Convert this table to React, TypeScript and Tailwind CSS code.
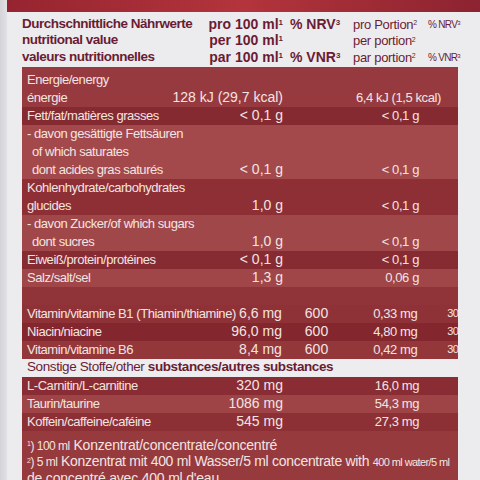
import React from "react";

type Row = {
  l: string;
  v?: string;
  n?: string;
  p?: string;
  q?: string;
  indent?: boolean;
  bg: string;
};

const rows: Row[] = [
  { l: "Energie/energy", bg: "bg-[#973a3f]" },
  { l: "énergie", v: "128 kJ (29,7 kcal)", p: "6,4 kJ (1,5 kcal)", bg: "bg-[#973a3f]" },
  { l: "Fett/fat/matières grasses", v: "< 0,1 g", p: "< 0,1 g", bg: "bg-[#862a31]" },
  { l: "- davon gesättigte Fettsäuren", bg: "bg-[#a3494b]" },
  { l: "of which saturates", indent: true, bg: "bg-[#a3494b]" },
  { l: "dont acides gras saturés", indent: true, v: "< 0,1 g", p: "< 0,1 g", bg: "bg-[#a3494b]" },
  { l: "Kohlenhydrate/carbohydrates", bg: "bg-[#8d2f35]" },
  { l: "glucides", v: "1,0 g", p: "< 0,1 g", bg: "bg-[#8d2f35]" },
  { l: "- davon Zucker/of which sugars", bg: "bg-[#a0474a]" },
  { l: "dont sucres", indent: true, v: "1,0 g", p: "< 0,1 g", bg: "bg-[#a0474a]" },
  { l: "Eiweiß/protein/protéines", v: "< 0,1 g", p: "< 0,1 g", bg: "bg-[#872b32]" },
  { l: "Salz/salt/sel", v: "1,3 g", p: "0,06 g", bg: "bg-[#a04548]" },
  { l: "", bg: "bg-[#913439]" },
  { l: "Vitamin/vitamine B1 (Thiamin/thiamine)", v: "6,6 mg", n: "600", p: "0,33 mg", q: "30", bg: "bg-[#8f3237]" },
  { l: "Niacin/niacine", v: "96,0 mg", n: "600", p: "4,80 mg", q: "30", bg: "bg-[#83262e]" },
  { l: "Vitamin/vitamine B6", v: "8,4 mg", n: "600", p: "0,42 mg", q: "30", bg: "bg-[#94373b]" },
];

const others: Row[] = [
  { l: "L-Carnitin/L-carnitine", v: "320 mg", p: "16,0 mg", bg: "bg-[#8a2c33]" },
  { l: "Taurin/taurine", v: "1086 mg", p: "54,3 mg", bg: "bg-[#9e4447]" },
  { l: "Koffein/caffeine/caféine", v: "545 mg", p: "27,3 mg", bg: "bg-[#8d3036]" },
];

function TableRow({ r }: { r: Row }) {
  return (
    <div className={`flex h-[18px] items-center whitespace-nowrap ${r.bg}`}>
      <div className="w-[261px] flex justify-between items-center pl-[5px]">
        <span className={`text-[13px] tracking-[-0.45px] ${r.indent ? "pl-[5px]" : ""}`}>{r.l}</span>
        <span className="text-[14px]">{r.v}</span>
      </div>
      <div className="w-[23px]" />
      <div className="w-[50px] text-[14px]">{r.n}</div>
      <div className="w-[63px] text-right text-[13px] tracking-[-0.4px]">{r.p}</div>
      <div className="pl-[30px] text-[11px] tracking-[-0.8px]">{r.q}</div>
    </div>
  );
}

function HeadLine({ label, per, nrv }: { label: string; per: string; nrv?: string }) {
  return (
    <div className="flex h-[16.5px] items-center whitespace-nowrap">
      <div className="w-[261px] flex justify-between font-bold">
        <span className="text-[13.5px] tracking-[-0.5px]">{label}</span>
        <span className="text-[14px]">
          {per} 100 ml<sup className="text-[8px]">1</sup>
        </span>
      </div>
      <div className="w-[70px] pl-[7px] font-bold text-[14px]">
        {nrv && (
          <>
            % {nrv}
            <sup className="text-[8px]">3</sup>
          </>
        )}
      </div>
      <div className="w-[62px] text-[13px] tracking-[-0.3px]">
        {per === "pro" ? "pro Portion" : per === "per" ? "per portion" : "par portion"}
        <sup className="text-[7px]">2</sup>
      </div>
      <div className="pl-[13px] text-[10px] tracking-[-0.7px]">
        {nrv && (
          <>
            % {nrv}
            <sup className="text-[6px]">3</sup>
          </>
        )}
      </div>
    </div>
  );
}

export default function App() {
  return (
    <div className="w-[480px] h-[480px] overflow-hidden flex bg-[#ececef] font-['Liberation_Sans',Arial,sans-serif]">
      <div className="w-[7px] shrink-0 bg-gradient-to-r from-[#d4d4d8] to-[#e2e2e6]" />
      <div className="flex-1 flex flex-col">
        <div className="h-[12px] shrink-0 bg-gradient-to-r from-[#962430] via-[#b3343c] to-[#8c2330]" />
        <div className="pl-[15px] pt-[4px] pb-[1px] text-[#6b1c33]">
          <HeadLine label="Durchschnittliche Nährwerte" per="pro" nrv="NRV" />
          <HeadLine label="nutritional value" per="per" />
          <HeadLine label="valeurs nutritionnelles" per="par" nrv="VNR" />
        </div>
        <div className="ml-[15px] w-[436px] flex-1 flex flex-col text-[#f3e4e2]">
          <div className="h-[4px] bg-[#973a3f]" />
          {rows.map((r, i) => (
            <TableRow key={i} r={r} />
          ))}
          <div className="h-[18px] flex items-center pl-[5px] bg-[#ededf0] text-[#6b1c33] text-[13.5px] tracking-[-0.4px] whitespace-nowrap">
            <span>Sonstige Stoffe/other&nbsp;</span>
            <span className="font-bold">substances/autres substances</span>
          </div>
          {others.map((r, i) => (
            <TableRow key={i} r={r} />
          ))}
          <div className="flex-1 bg-[#963a3e] pt-[7px] pl-[5px] leading-[15.5px] whitespace-nowrap overflow-hidden">
            <div className="text-[14px] tracking-[-0.2px]">
              <span className="text-[12px] tracking-[-0.5px]">
                <sup className="text-[7px]">1</sup>) 100 ml
              </span>{" "}
              Konzentrat/concentrate/concentré
            </div>
            <div className="text-[14px] tracking-[-0.3px]">
              <span className="text-[12px] tracking-[-0.5px]">
                <sup className="text-[7px]">2</sup>) 5 ml
              </span>{" "}
              Konzentrat mit 400 ml Wasser/5 ml concentrate with{" "}
              <span className="text-[11px] tracking-[-0.6px]">400 ml water/5 ml</span>
            </div>
            <div className="text-[14px] tracking-[-0.2px]">de concentré avec 400 ml d'eau</div>
          </div>
        </div>
      </div>
    </div>
  );
}
